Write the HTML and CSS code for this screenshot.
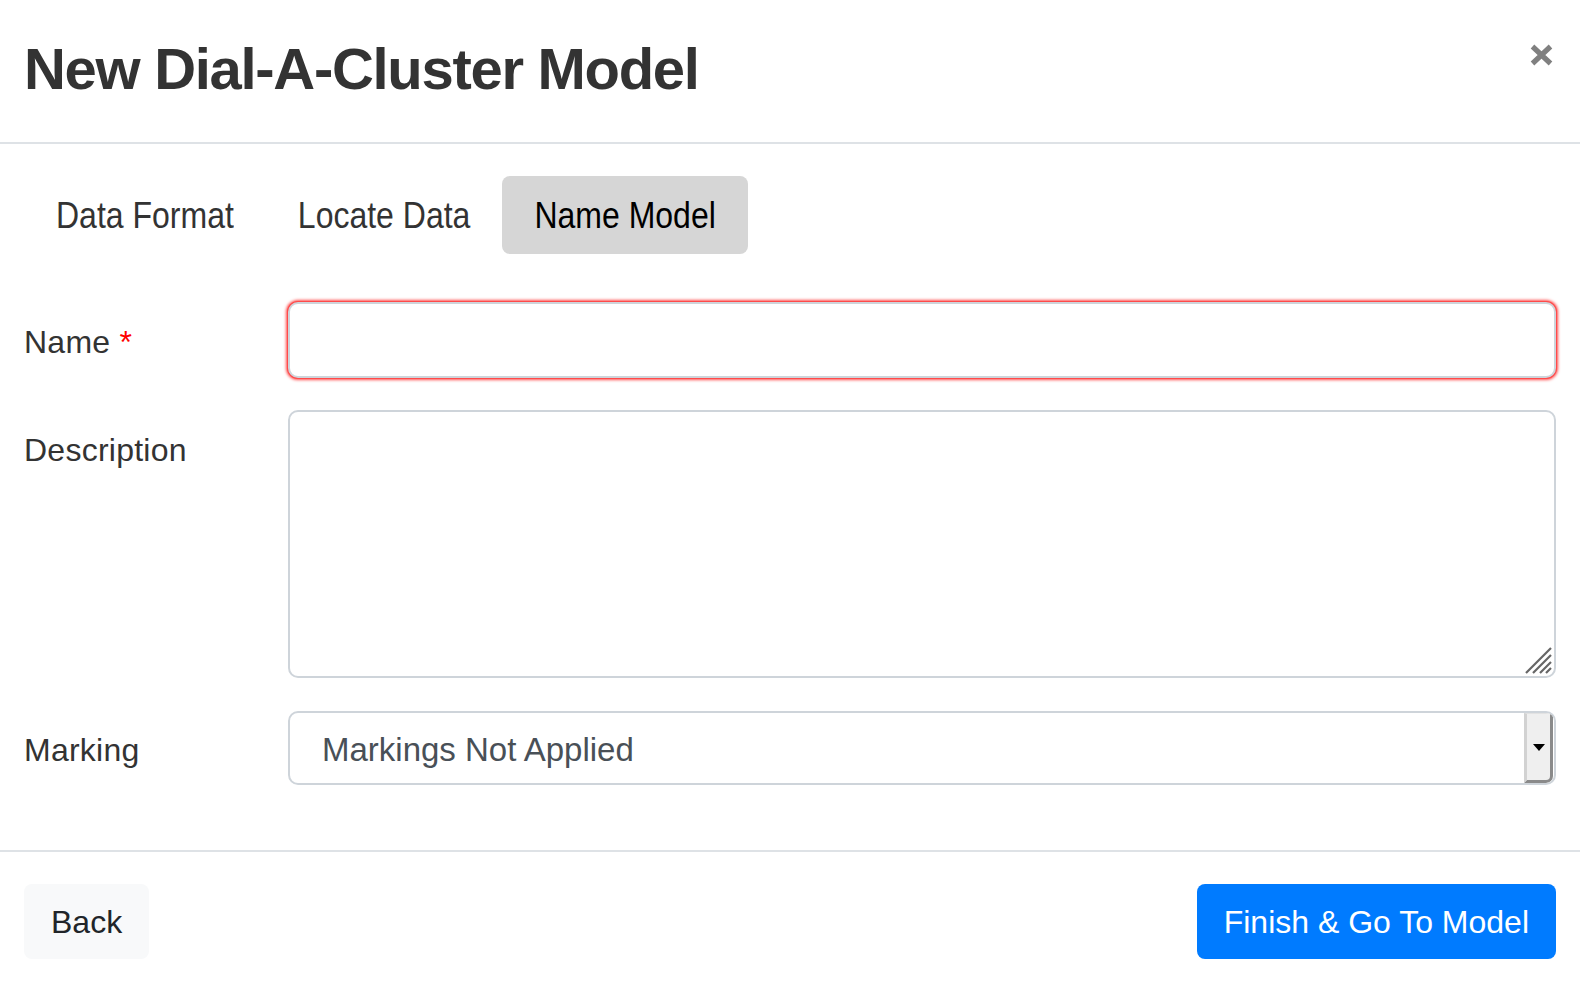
FILE: index.html
```html
<!DOCTYPE html>
<html lang="en">
<head>
<meta charset="utf-8">
<title>New Dial-A-Cluster Model</title>
<link rel="stylesheet" href="styles.css">
</head>
<body>
<div class="modal">
  <header class="modal-header">
    <h1 class="modal-title">New Dial-A-Cluster Model</h1>
    <button class="close" type="button" aria-label="Close">
      <svg width="23" height="22" viewBox="0 0 23 22"><path d="M2.5 2.5 L20.5 19.5 M20.5 2.5 L2.5 19.5" stroke="#808080" stroke-width="5.2" fill="none"/></svg>
    </button>
  </header>
  <div class="modal-body">
    <nav class="tabs">
      <a class="tab" href="#"><span class="tab-text">Data Format</span></a>
      <a class="tab" href="#"><span class="tab-text">Locate Data</span></a>
      <a class="tab active" href="#"><span class="tab-text">Name Model</span></a>
    </nav>
    <form class="form">
      <label class="label" for="name">Name <span class="req">*</span></label>
      <input id="name" class="control invalid" type="text">
      <label class="label" for="desc">Description</label>
      <div class="area-wrap">
        <textarea id="desc" class="control area"></textarea>
        <svg class="grip" width="28" height="28" viewBox="0 0 28 28"><path d="M2 27 L27 2 M9 27 L27 9 M16 27 L27 16 M22 27 L27 22" stroke="#666" stroke-width="2.2" fill="none"/></svg>
      </div>
      <label class="label">Marking</label>
      <div class="select">
        <span class="select-value">Markings Not Applied</span>
        <span class="select-btn"><span class="caret"></span></span>
      </div>
    </form>
  </div>
  <footer class="modal-footer">
    <button class="btn btn-light" type="button">Back</button>
    <button class="btn btn-primary" type="button">Finish &amp; Go To Model</button>
  </footer>
</div>
</body>
</html>
```
FILE: styles.css
```css
* { box-sizing: border-box; }
body {
  margin: 0;
  background: #fff;
  font-family: "Liberation Sans", Arial, sans-serif;
  color: #333;
}
.modal { width: 1580px; }

.modal-header {
  display: flex;
  justify-content: space-between;
  align-items: flex-start;
  padding: 34px 27px 38px 24px;
  border-bottom: 2px solid #dee2e6;
}
.modal-title {
  margin: 0;
  font-size: 58px;
  line-height: 70px;
  font-weight: 700;
  letter-spacing: -1.3px;
  color: #333;
}
.close {
  border: 0;
  background: none;
  padding: 0;
  margin-top: 10px;
  width: 23px;
  height: 22px;
  cursor: pointer;
}
.close svg { display: block; overflow: visible; }

.modal-body { padding: 32px 24px 65px; }

.tabs { display: flex; }
.tab {
  display: block;
  height: 78px;
  padding: 0 32px;
  font-size: 32px;
  line-height: 78px;
  color: #333;
  text-decoration: none;
  border-radius: 8px;
}
.tab-text {
  display: inline-block;
  line-height: 78px;
  transform: scaleY(1.18);
}
.tab.active { background: #d6d6d6; color: #000; }

.form {
  margin-top: 48px;
  display: grid;
  grid-template-columns: 264px 1fr;
  row-gap: 32px;
}
.label {
  padding-top: 16px;
  font-size: 32px;
  line-height: 48px;
  letter-spacing: 0.25px;
  color: #333;
}
.req { color: #f00; }

.control {
  display: block;
  width: 100%;
  margin: 0;
  border: 2px solid #ced4da;
  border-radius: 10px;
  background: #fff;
  font-family: inherit;
  font-size: 32px;
  color: #495057;
  outline: none;
}
.invalid {
  height: 76px;
  box-shadow: 0 0 0 1px #ff4a4a, 0 0 3px 2px rgba(255, 0, 0, 0.7);
}
.area-wrap { position: relative; }
.area { height: 268px; resize: none; }
.grip { position: absolute; right: 4px; bottom: 4px; }

.select {
  display: flex;
  height: 74px;
  margin-top: 1px;
  border: 2px solid #ced4da;
  border-radius: 10px;
  background: #fff;
  overflow: hidden;
}
.select-value {
  flex: 1;
  align-self: center;
  padding: 4px 0 0 32px;
  font-size: 33px;
  line-height: 48px;
  color: #495057;
}
.select-btn {
  display: flex;
  align-items: center;
  justify-content: center;
  width: 29px;
  margin-right: 1px;
  background: #efefef;
  border-top: 1px solid #e2e2e2;
  border-left: 3px solid #d2d2d2;
  border-right: 3px solid #8a8a8a;
  border-bottom: 3px solid #8a8a8a;
  border-bottom-right-radius: 7px;
}
.caret {
  width: 0;
  height: 0;
  border-left: 6px solid transparent;
  border-right: 6px solid transparent;
  border-top: 7px solid #000;
}

.modal-footer {
  display: flex;
  justify-content: space-between;
  padding: 32px 24px 27px;
  border-top: 2px solid #dee2e6;
}
.btn {
  height: 75px;
  padding: 13px 26px 12px;
  border: 1px solid transparent;
  border-radius: 8px;
  font-family: inherit;
  font-size: 32px;
  line-height: 48px;
  cursor: pointer;
}
.btn-light { background: #f8f9fa; color: #212529; }
.btn-primary { background: #007bff; color: #fff; }
```
